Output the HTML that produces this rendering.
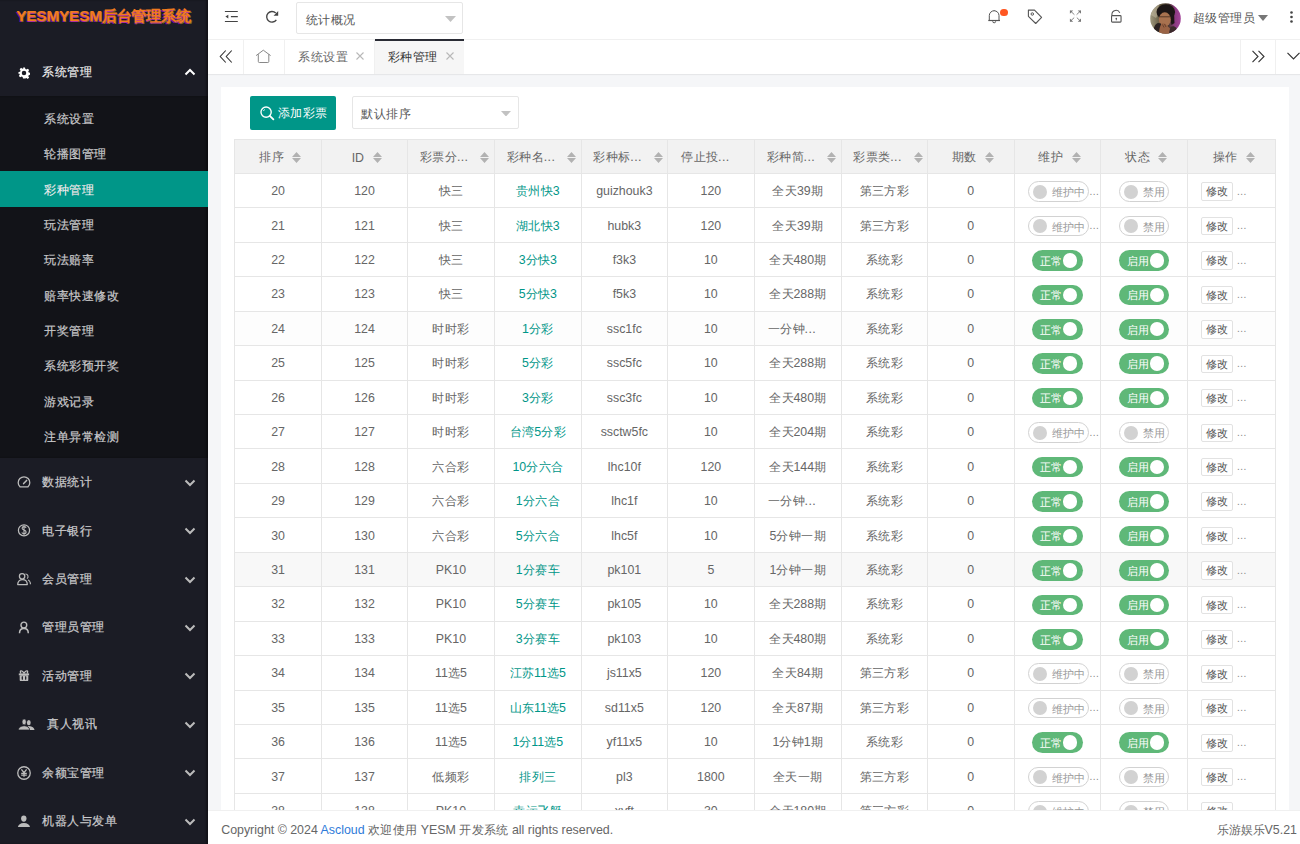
<!DOCTYPE html><html><head><meta charset="utf-8"><style>
*{margin:0;padding:0;box-sizing:border-box}
html,body{width:1300px;height:844px;overflow:hidden;background:#f5f6f8;font-family:"Liberation Sans",sans-serif;}
.a{position:absolute}
.t{position:absolute;white-space:nowrap}
#side{left:0;top:0;width:208px;height:844px;background:#1b1c25;box-shadow:inset -2px 0 2px rgba(0,0,0,.35)}
#sub{left:0;top:96px;width:208px;height:362px;background:#121318;box-shadow:inset -2px 0 2px rgba(0,0,0,.35)}
.logo{left:16.2px;top:4px;font-size:15.4px;font-weight:bold;color:#f07a1e;letter-spacing:-0.2px;line-height:24px;
 text-shadow:-0.6px 1px 0 rgba(210,0,255,.6),0.8px 1px 0 rgba(255,235,0,.45)}
.gi{font-size:12.4px;letter-spacing:.5px;color:#cbcbcd;line-height:20px;-webkit-text-stroke:.2px #cbcbcd}
.si{font-size:12.4px;letter-spacing:.5px;color:#c8c8ca;line-height:20px;-webkit-text-stroke:.2px #c8c8ca}
#hdr{left:208px;top:0;width:1092px;height:40px;background:#fff;border-bottom:1px solid #f0f0f0}
#tabs{left:208px;top:40px;width:1092px;height:34px;background:#fff;box-shadow:0 1px 1px rgba(0,0,0,.06)}
.vl{position:absolute;width:1px;background:#f0f0f0}
#card{left:220.7px;top:86.8px;width:1068.5px;height:760px;background:#fff}
#foot{left:208px;top:810px;width:1092px;height:34px;background:#fff;border-top:1px solid #f0f0f0}
.cell{position:absolute;text-align:center;font-size:12.36px;color:#666;line-height:20px;white-space:nowrap}
.lnk{color:#009688}
.hl{position:absolute;height:1px;background:#e6e6e6}
.vln{position:absolute;width:1px;background:#e6e6e6}
.sw{position:absolute;height:20.5px;border-radius:11px}
.sw.on{background:#5fb878}
.sw.off{background:#fff;border:1px solid #d2d2d2}
.knob{position:absolute;border-radius:50%}
.swt{position:absolute;font-size:10.6px;line-height:14px;white-space:nowrap}
.btnx{position:absolute;height:18.4px;width:31.5px;border:1px solid #e2e2e2;border-radius:2px;background:#fff;font-size:10.6px;color:#555;line-height:16.4px;text-align:center}
.dots{position:absolute;font-size:10px;color:#888;line-height:10px;letter-spacing:0.5px}
</style></head><body>
<div id="side" class="a"></div><div id="sub" class="a"></div>
<div class="t logo">YESMYESM后台管理系统</div>
<svg class="a" style="left:17.5px;top:66.5px" width="12" height="12" viewBox="0 0 24 24"><path fill="#fff" fill-rule="evenodd" d="M10 1h4l.7 3.2 2 .9 2.8-1.8 2.8 2.8-1.8 2.8.9 2 3.2.7v4l-3.2.7-.9 2 1.8 2.8-2.8 2.8-2.8-1.8-2 .9L14 23h-4l-.7-3.2-2-.9-2.8 1.8-2.8-2.8 1.8-2.8-.9-2L1 14v-4l3.2-.7.9-2-1.8-2.8 2.8-2.8 2.8 1.8 2-.9zM12 7.5a4.5 4.5 0 1 0 0 9 4.5 4.5 0 0 0 0-9z"/></svg>
<div class="t gi" style="left:42px;top:61.8px;color:#fff">系统管理</div>
<svg class="a" style="left:184px;top:68px" width="12" height="8" viewBox="0 0 12 8"><path d="M1.5 6.5 6 2l4.5 4.5" fill="none" stroke="#fff" stroke-width="2"/></svg>
<div class="t si" style="left:44px;top:109.07px;">系统设置</div>
<div class="t si" style="left:44px;top:144.4px;">轮播图管理</div>
<div class="a" style="left:0;top:171.36px;width:208px;height:35.8px;background:#009688"></div>
<div class="t si" style="left:44px;top:179.73px;color:#fff">彩种管理</div>
<div class="t si" style="left:44px;top:215.06px;">玩法管理</div>
<div class="t si" style="left:44px;top:250.39px;">玩法赔率</div>
<div class="t si" style="left:44px;top:285.72px;">赔率快速修改</div>
<div class="t si" style="left:44px;top:321.05px;">开奖管理</div>
<div class="t si" style="left:44px;top:356.38px;">系统彩预开奖</div>
<div class="t si" style="left:44px;top:391.71px;">游戏记录</div>
<div class="t si" style="left:44px;top:427.04px;">注单异常检测</div>
<svg class="a" style="left:12px;top:470px" width="24" height="24" viewBox="0 0 24 24"><path d="M8 16.8A5.8 5.8 0 1 1 16 16.8Z" fill="none" stroke="#bcbcbc" stroke-width="1.3" stroke-linejoin="round"/><path d="M11.6 13.6 14.6 10.4" stroke="#bcbcbc" stroke-width="1.5" stroke-linecap="round"/></svg>
<div class="t gi" style="left:42.3px;top:472.2px">数据统计</div>
<svg class="a" style="left:184px;top:478.7px" width="12" height="8" viewBox="0 0 12 8"><path d="M1.5 1.5 6 6l4.5-4.5" fill="none" stroke="#bbb" stroke-width="2"/></svg>
<svg class="a" style="left:12px;top:518px" width="24" height="24" viewBox="0 0 24 24"><circle cx="12" cy="12.35" r="5.6" fill="none" stroke="#bcbcbc" stroke-width="1.25"/><path d="M14.1 9.7C13.7 9 13 8.6 12 8.6 10.9 8.6 10.1 9.2 10.1 10.2 10.1 12.4 14.1 11.6 14.1 14 14.1 15 13.2 15.7 12 15.7 11 15.7 10.2 15.2 9.8 14.5M12 7.4V17.2" fill="none" stroke="#bcbcbc" stroke-width="1.1"/></svg>
<div class="t gi" style="left:42.3px;top:520.63px">电子银行</div>
<svg class="a" style="left:184px;top:527.13px" width="12" height="8" viewBox="0 0 12 8"><path d="M1.5 1.5 6 6l4.5-4.5" fill="none" stroke="#bbb" stroke-width="2"/></svg>
<svg class="a" style="left:12px;top:567px" width="24" height="24" viewBox="0 0 24 24"><circle cx="10.1" cy="9.3" r="2.7" fill="none" stroke="#bcbcbc" stroke-width="1.25"/><path d="M5.7 17.6C5.7 14.3 7.8 12.6 10.5 12.6 13.2 12.6 15.3 14.3 15.3 17.6Z" fill="none" stroke="#bcbcbc" stroke-width="1.25" stroke-linejoin="round"/><path d="M13.4 7A2.6 2.6 0 0 1 15 11.7M16 12.9C17.6 13.7 18.5 15.3 18.5 17.3" fill="none" stroke="#bcbcbc" stroke-width="1.05"/></svg>
<div class="t gi" style="left:42.3px;top:569.06px">会员管理</div>
<svg class="a" style="left:184px;top:575.56px" width="12" height="8" viewBox="0 0 12 8"><path d="M1.5 1.5 6 6l4.5-4.5" fill="none" stroke="#bbb" stroke-width="2"/></svg>
<svg class="a" style="left:12px;top:615px" width="24" height="24" viewBox="0 0 24 24"><circle cx="11.85" cy="10" r="2.9" fill="none" stroke="#bcbcbc" stroke-width="1.4"/><path d="M7.5 18.2C7.5 15.2 9.4 13.6 11.9 13.6S16.3 15.2 16.3 18.2" fill="none" stroke="#bcbcbc" stroke-width="1.5"/></svg>
<div class="t gi" style="left:42.3px;top:617.49px">管理员管理</div>
<svg class="a" style="left:184px;top:623.99px" width="12" height="8" viewBox="0 0 12 8"><path d="M1.5 1.5 6 6l4.5-4.5" fill="none" stroke="#bbb" stroke-width="2"/></svg>
<svg class="a" style="left:12px;top:664px" width="24" height="24" viewBox="0 0 24 24"><path d="M6.8 9.4h10.3v2H6.8z" fill="#bcbcbc"/><rect x="7.7" y="11.2" width="8.6" height="5.9" rx="1.2" fill="#bcbcbc"/><ellipse cx="10.3" cy="14" rx=".7" ry="2" fill="#1b1c25"/><ellipse cx="13.7" cy="14" rx=".7" ry="2" fill="#1b1c25"/><path d="M12 9.4C11 7.2 9.6 6.5 8.8 6.9 8 7.4 8.3 8.8 9.2 9.4M12 9.4C13 7.2 14.4 6.5 15.2 6.9 16 7.4 15.7 8.8 14.8 9.4" stroke="#bcbcbc" stroke-width="1.3" fill="none"/></svg>
<div class="t gi" style="left:42.3px;top:665.92px">活动管理</div>
<svg class="a" style="left:184px;top:672.42px" width="12" height="8" viewBox="0 0 12 8"><path d="M1.5 1.5 6 6l4.5-4.5" fill="none" stroke="#bbb" stroke-width="2"/></svg>
<svg class="a" style="left:12px;top:712px" width="30" height="24" viewBox="0 0 30 24"><ellipse cx="16.8" cy="10.7" rx="1.9" ry="2.6" fill="#bcbcbc"/><path d="M15.4 14.1C19.4 14.1 22.2 15.4 22.5 17.9H17.6C17.5 16.2 16.8 14.9 15.4 14.1Z" fill="#bcbcbc"/><ellipse cx="12.15" cy="9.9" rx="2.1" ry="2.9" fill="#bcbcbc" stroke="#1b1c25" stroke-width=".6"/><path d="M6.4 17.9C6.6 15.4 8.6 14 12.2 13.8 15.5 14 17.4 15.4 17.6 17.9Z" fill="#bcbcbc" stroke="#1b1c25" stroke-width=".6"/></svg>
<div class="t gi" style="left:47.4px;top:714.35px">真人视讯</div>
<svg class="a" style="left:184px;top:720.85px" width="12" height="8" viewBox="0 0 12 8"><path d="M1.5 1.5 6 6l4.5-4.5" fill="none" stroke="#bbb" stroke-width="2"/></svg>
<svg class="a" style="left:12px;top:761px" width="24" height="24" viewBox="0 0 24 24"><circle cx="12" cy="12" r="6.25" fill="none" stroke="#bcbcbc" stroke-width="1.3"/><path d="M9.4 8.3 12 11.6 14.6 8.3M12 11.6V15.8M9.2 12.3H14.8M9.2 14.1H14.8" fill="none" stroke="#bcbcbc" stroke-width="1.3"/></svg>
<div class="t gi" style="left:42.3px;top:762.78px">余额宝管理</div>
<svg class="a" style="left:184px;top:769.28px" width="12" height="8" viewBox="0 0 12 8"><path d="M1.5 1.5 6 6l4.5-4.5" fill="none" stroke="#bbb" stroke-width="2"/></svg>
<svg class="a" style="left:12px;top:809px" width="24" height="24" viewBox="0 0 24 24"><ellipse cx="11.8" cy="9.6" rx="2.7" ry="3.1" fill="#bcbcbc"/><path d="M5.9 18C6.2 15.4 8.4 14.1 11.9 13.9 15.5 14.1 17.7 15.4 18 18Z" fill="#bcbcbc"/></svg>
<div class="t gi" style="left:42.3px;top:811.21px">机器人与发单</div>
<svg class="a" style="left:184px;top:817.71px" width="12" height="8" viewBox="0 0 12 8"><path d="M1.5 1.5 6 6l4.5-4.5" fill="none" stroke="#bbb" stroke-width="2"/></svg>
<div id="hdr" class="a"></div>
<svg class="a" style="left:218px;top:4px" width="24" height="26" viewBox="0 0 24 26"><path d="M6.9 7.5H19.8M12.9 12.6H19.8M6.9 17.5H19.8" stroke="#444" stroke-width="1.15"/><path d="M7.4 12.6 10.3 10.7V14.5Z" fill="#444"/></svg>
<svg class="a" style="left:260px;top:4px" width="24" height="26" viewBox="0 0 24 26"><path d="M15.75 9.05A5.3 5.3 0 1 0 16.34 15.84" fill="none" stroke="#444" stroke-width="1.35"/><path d="M18.2 7.1V11.7H13.6Z" fill="#444"/></svg>
<div class="a" style="left:296.3px;top:2px;width:167.2px;height:32.3px;border:1px solid #e6e6e6;border-radius:2px;background:#fff"></div>
<div class="t" style="left:305.6px;top:9.7px;font-size:12.4px;line-height:20px;color:#555;letter-spacing:.5px">统计概况</div>
<svg class="a" style="left:444.5px;top:16px" width="11" height="6" viewBox="0 0 11 6"><path d="M0 0h11L5.5 6z" fill="#c2c2c2"/></svg>
<svg class="a" style="left:984px;top:4px" width="24" height="26" viewBox="0 0 24 26"><path d="M5.3 16.5V11.6A4.85 4.85 0 0 1 15 11.6V16.5" fill="none" stroke="#555" stroke-width="1"/><path d="M4.3 16.5H16" stroke="#555" stroke-width="1.2"/><path d="M8.7 17.3A1.5 1.5 0 0 0 11.7 17.3" fill="none" stroke="#555" stroke-width="1"/><path d="M10.15 6.2V6.9" stroke="#555" stroke-width="1"/></svg>
<div class="a" style="left:1000.4px;top:8.6px;width:7.2px;height:7.2px;border-radius:50%;background:#ff5722"></div>
<svg class="a" style="left:1024px;top:4px" width="24" height="26" viewBox="0 0 24 26"><path d="M4.4 6.1H10.5L17.6 13.4 11.7 19.5 4.4 12.3Z" fill="none" stroke="#555" stroke-width="1.1" stroke-linejoin="round"/><circle cx="8.3" cy="10" r="1.25" fill="none" stroke="#555" stroke-width="1"/></svg>
<svg class="a" style="left:1064px;top:4px" width="24" height="26" viewBox="0 0 24 26"><path d="M6.5 7 10.4 10.7M16.4 7 12.6 10.7M6.5 17.1 10.2 13.6M16.4 17.1 12.8 13.6" stroke="#777" stroke-width=".9"/><path d="M5.9 6.4H9.2L5.9 9.7ZM17 6.4H13.7L17 9.7ZM5.9 17.7H9.2L5.9 14.4ZM17 17.7H13.7L17 14.4Z" fill="#777"/></svg>
<svg class="a" style="left:1104px;top:4px" width="24" height="26" viewBox="0 0 24 26"><rect x="7.55" y="11.65" width="9.5" height="6.5" rx=".8" fill="none" stroke="#555" stroke-width="1.1"/><path d="M7.9 11.6V10.4A4.1 4.1 0 0 1 15.8 8.9" fill="none" stroke="#555" stroke-width="1.05"/><circle cx="12.3" cy="14.5" r=".8" fill="#555"/><path d="M12.3 14.5V16.3" stroke="#555" stroke-width=".9"/></svg>
<svg class="a" style="left:1150px;top:2.6px" width="31" height="31" viewBox="0 0 31 31"><defs><clipPath id="av"><circle cx="15.5" cy="15.5" r="15.3"/></clipPath>
<linearGradient id="avbg" x1="0" x2="1" y1="0" y2="0"><stop offset="0" stop-color="#a09a80"/><stop offset=".3" stop-color="#6a6048"/><stop offset=".6" stop-color="#4a3a32"/><stop offset=".8" stop-color="#8a3a80"/><stop offset="1" stop-color="#a4449a"/></linearGradient>
<filter id="avb" x="-10%" y="-10%" width="120%" height="120%"><feGaussianBlur stdDeviation=".55"/></filter></defs>
<g clip-path="url(#av)"><rect width="31" height="31" fill="url(#avbg)"/>
<g filter="url(#avb)">
<path d="M1 12C2 7 5 3 9 2l2 5-5 8z" fill="#d0c8b0" opacity=".45"/>
<ellipse cx="15.8" cy="9" rx="9.3" ry="7.8" fill="#1f1713"/>
<path d="M19 10l5 1 .5 9-3 2z" fill="#1f1713"/>
<ellipse cx="14.8" cy="16.5" rx="6" ry="7.2" fill="#a87250"/>
<path d="M8 9.8c3-1.8 9-1.8 12.5 0l.3-4-12.5 0z" fill="#1f1713"/>
<path d="M9 13.8h11" stroke="#3a2418" stroke-width="1" opacity=".75"/>
<path d="M3 31c0-6 2-10 5-11l3 .5 1 10.5z" fill="#2a2220"/>
<path d="M9 31c0-4 1-9 3-10.5 1.5-.8 3.5 0 4.5 1.5l3.5 3.5-1 5.5z" fill="#9a6444"/>
<path d="M12.5 21.5l1.5 3M14.5 21l1.5 3" stroke="#5a3424" stroke-width=".7"/>
<path d="M19 31l1.5-7c2-1 4-1 6 1l1 6z" fill="#3a2a2a"/>
</g></g></svg>
<div class="t" style="left:1192.8px;top:7.8px;font-size:12.4px;line-height:20px;color:#555;letter-spacing:.45px">超级管理员</div>
<svg class="a" style="left:1257.8px;top:15px" width="10" height="6" viewBox="0 0 10 6"><path d="M0 0h10L5 6z" fill="#777"/></svg>
<svg class="a" style="left:1289.5px;top:10.5px" width="3" height="12" viewBox="0 0 3 12"><circle cx="1.5" cy="1.5" r="1.3" fill="#444"/><circle cx="1.5" cy="6" r="1.3" fill="#444"/><circle cx="1.5" cy="10.5" r="1.3" fill="#444"/></svg>
<div id="tabs" class="a"></div>
<svg class="a" style="left:219px;top:50px" width="13.5" height="13" viewBox="0 0 13 13"><path d="M6.5 0.5 1 6.5l5.5 6M12.5 0.5 7 6.5l5.5 6" fill="none" stroke="#333" stroke-width="1.1"/></svg>
<div class="vl" style="left:243px;top:40px;height:34px"></div>
<svg class="a" style="left:252px;top:46px" width="24" height="20" viewBox="0 0 24 20"><path d="M4.1 9.6 11.3 4.2 18.6 9.6M6.3 8.2V15.5Q6.3 16.5 7.3 16.5H15.8Q16.8 16.5 16.8 15.5V8.2" fill="none" stroke="#888" stroke-width="1"/></svg>
<div class="vl" style="left:284px;top:40px;height:34px"></div>
<div class="t" style="left:298px;top:46.5px;font-size:12.4px;line-height:20px;color:#666;letter-spacing:.5px">系统设置</div>
<svg class="a" style="left:355.8px;top:52.3px" width="8" height="8" viewBox="0 0 8 8"><path d="M.5.5l7 7M7.5.5l-7 7" stroke="#b8b8b8" stroke-width="1.1"/></svg>
<div class="a" style="left:374.8px;top:39px;width:89.7px;height:35px;background:#f6f6f6;border-top:2px solid #292b34"></div>
<div class="vl" style="left:374.3px;top:40px;height:34px"></div>
<div class="t" style="left:387.5px;top:46.5px;font-size:12.4px;line-height:20px;color:#333;letter-spacing:.5px">彩种管理</div>
<svg class="a" style="left:445.8px;top:52.3px" width="8" height="8" viewBox="0 0 8 8"><path d="M.5.5l7 7M7.5.5l-7 7" stroke="#b8b8b8" stroke-width="1.1"/></svg>
<div class="vl" style="left:1240px;top:40px;height:34px"></div>
<svg class="a" style="left:1252px;top:50px" width="13" height="13" viewBox="0 0 13 13"><path d="M.5 0.8 6 6.5l-5.5 5.7M6.5 0.8 12 6.5l-5.5 5.7" fill="none" stroke="#333" stroke-width="1.1"/></svg>
<div class="vl" style="left:1275px;top:40px;height:34px"></div>
<svg class="a" style="left:1287px;top:52px" width="13" height="8" viewBox="0 0 13 8"><path d="M.5.8 6.5 6.8 12.5.8" fill="none" stroke="#333" stroke-width="1.2"/></svg>
<div id="card" class="a"></div>
<div class="a" style="left:250px;top:96px;width:86px;height:34px;background:#009688;border-radius:2px"></div>
<svg class="a" style="left:259.5px;top:105.5px" width="15.5" height="15.5" viewBox="0 0 16 16"><circle cx="6.3" cy="6.3" r="5.3" fill="none" stroke="#fff" stroke-width="1.4"/><path d="M10.1 10.1 13.8 13.8" stroke="#fff" stroke-width="1.9" stroke-linecap="round"/><path d="M3.6 5.2a3 3 0 0 1 1.2-1.6" fill="none" stroke="#fff" stroke-width="1"/></svg>
<div class="t" style="left:277.5px;top:103px;font-size:12.4px;line-height:20px;color:#fff;letter-spacing:.5px">添加彩票</div>
<div class="a" style="left:352.4px;top:96.3px;width:167.1px;height:33.2px;border:1px solid #e6e6e6;border-radius:2px;background:#fff"></div>
<div class="t" style="left:361.2px;top:104px;font-size:12.4px;line-height:20px;color:#555;letter-spacing:.5px">默认排序</div>
<svg class="a" style="left:500.6px;top:110.5px" width="10" height="5.5" viewBox="0 0 10 5.5"><path d="M0 0h10L5 5.5z" fill="#c2c2c2"/></svg>
<div id="tbl" class="a" style="left:0;top:0;width:1300px;height:810px;overflow:hidden">
<div class="a" style="left:234.7px;top:139.2px;width:1040.9px;height:34.2px;background:#f2f2f2"></div>
<div class="a" style="left:234.7px;top:311.18px;width:1040.9px;height:34.45px;background:#fdfdfd"></div>
<div class="a" style="left:234.7px;top:552.29px;width:1040.9px;height:34.45px;background:#f8f8f8"></div>
<div class="hl" style="left:234.7px;top:138.7px;width:1040.9px"></div>
<div class="hl" style="left:234.7px;top:172.9px;width:1040.9px"></div>
<div class="hl" style="left:234.7px;top:207.34px;width:1040.9px"></div>
<div class="hl" style="left:234.7px;top:241.79px;width:1040.9px"></div>
<div class="hl" style="left:234.7px;top:276.24px;width:1040.9px"></div>
<div class="hl" style="left:234.7px;top:310.68px;width:1040.9px"></div>
<div class="hl" style="left:234.7px;top:345.12px;width:1040.9px"></div>
<div class="hl" style="left:234.7px;top:379.57px;width:1040.9px"></div>
<div class="hl" style="left:234.7px;top:414.01px;width:1040.9px"></div>
<div class="hl" style="left:234.7px;top:448.46px;width:1040.9px"></div>
<div class="hl" style="left:234.7px;top:482.9px;width:1040.9px"></div>
<div class="hl" style="left:234.7px;top:517.35px;width:1040.9px"></div>
<div class="hl" style="left:234.7px;top:551.79px;width:1040.9px"></div>
<div class="hl" style="left:234.7px;top:586.24px;width:1040.9px"></div>
<div class="hl" style="left:234.7px;top:620.69px;width:1040.9px"></div>
<div class="hl" style="left:234.7px;top:655.13px;width:1040.9px"></div>
<div class="hl" style="left:234.7px;top:689.57px;width:1040.9px"></div>
<div class="hl" style="left:234.7px;top:724.02px;width:1040.9px"></div>
<div class="hl" style="left:234.7px;top:758.47px;width:1040.9px"></div>
<div class="hl" style="left:234.7px;top:792.91px;width:1040.9px"></div>
<div class="hl" style="left:234.7px;top:827.36px;width:1040.9px"></div>
<div class="vln" style="left:234.2px;top:139.2px;height:670.8px"></div>
<div class="vln" style="left:321px;top:139.2px;height:670.8px"></div>
<div class="vln" style="left:407.1px;top:139.2px;height:670.8px"></div>
<div class="vln" style="left:493.8px;top:139.2px;height:670.8px"></div>
<div class="vln" style="left:580.7px;top:139.2px;height:670.8px"></div>
<div class="vln" style="left:667px;top:139.2px;height:670.8px"></div>
<div class="vln" style="left:753.7px;top:139.2px;height:670.8px"></div>
<div class="vln" style="left:840.5px;top:139.2px;height:670.8px"></div>
<div class="vln" style="left:927px;top:139.2px;height:670.8px"></div>
<div class="vln" style="left:1013.5px;top:139.2px;height:670.8px"></div>
<div class="vln" style="left:1100.1px;top:139.2px;height:670.8px"></div>
<div class="vln" style="left:1187px;top:139.2px;height:670.8px"></div>
<div class="vln" style="left:1275.1px;top:139.2px;height:670.8px"></div>
<div class="a" style="left:234.7px;top:139.2px;width:86.8px;height:34.2px;display:flex;align-items:center;justify-content:center;padding:2.5px 13.25px 0 13.25px;font-size:12.36px;color:#666;white-space:nowrap">
<span><span style="letter-spacing:.45px">排</span>序</span>
<svg style="margin-left:8.8px;flex:none;margin-right:-4.4px;margin-top:-1px" width="9" height="11" viewBox="0 0 9 11"><path d="M0 5 4.5 0 9 5zM0 6h9L4.5 11z" fill="#b2b2b2"/></svg>
</div>
<div class="a" style="left:321.5px;top:139.2px;width:86.1px;height:34.2px;display:flex;align-items:center;justify-content:center;padding:2.5px 13.25px 0 13.25px;font-size:12.36px;color:#666;white-space:nowrap">
<span>ID</span>
<svg style="margin-left:8.8px;flex:none;margin-right:-4.4px;margin-top:-1px" width="9" height="11" viewBox="0 0 9 11"><path d="M0 5 4.5 0 9 5zM0 6h9L4.5 11z" fill="#b2b2b2"/></svg>
</div>
<div class="a" style="left:407.6px;top:139.2px;width:86.7px;height:34.2px;display:flex;align-items:center;justify-content:center;padding:2.5px 13.25px 0 13.25px;font-size:12.36px;color:#666;white-space:nowrap">
<span><span style="letter-spacing:.45px">彩票</span>分<span style="letter-spacing:.4px">...</span></span>
<svg style="margin-left:11.8px;flex:none;margin-right:-7.4px;margin-top:-1px" width="9" height="11" viewBox="0 0 9 11"><path d="M0 5 4.5 0 9 5zM0 6h9L4.5 11z" fill="#b2b2b2"/></svg>
</div>
<div class="a" style="left:494.3px;top:139.2px;width:86.9px;height:34.2px;display:flex;align-items:center;justify-content:center;padding:2.5px 13.25px 0 13.25px;font-size:12.36px;color:#666;white-space:nowrap">
<span><span style="letter-spacing:.45px">彩种</span>名<span style="letter-spacing:.4px">...</span></span>
<svg style="margin-left:11.8px;flex:none;margin-right:-7.4px;margin-top:-1px" width="9" height="11" viewBox="0 0 9 11"><path d="M0 5 4.5 0 9 5zM0 6h9L4.5 11z" fill="#b2b2b2"/></svg>
</div>
<div class="a" style="left:581.2px;top:139.2px;width:86.3px;height:34.2px;display:flex;align-items:center;justify-content:center;padding:2.5px 13.25px 0 13.25px;font-size:12.36px;color:#666;white-space:nowrap">
<span><span style="letter-spacing:.45px">彩种</span>标<span style="letter-spacing:.4px">...</span></span>
<svg style="margin-left:11.8px;flex:none;margin-right:-7.4px;margin-top:-1px" width="9" height="11" viewBox="0 0 9 11"><path d="M0 5 4.5 0 9 5zM0 6h9L4.5 11z" fill="#b2b2b2"/></svg>
</div>
<div class="a" style="left:667.5px;top:139.2px;width:86.7px;height:34.2px;display:flex;align-items:center;justify-content:flex-start;padding:2.5px 13.25px 0 13.7px;font-size:12.36px;color:#666;white-space:nowrap">
<span><span style="letter-spacing:.45px">停止</span>投<span style="letter-spacing:.4px">...</span></span>
</div>
<div class="a" style="left:754.2px;top:139.2px;width:86.8px;height:34.2px;display:flex;align-items:center;justify-content:center;padding:2.5px 13.25px 0 13.25px;font-size:12.36px;color:#666;white-space:nowrap">
<span><span style="letter-spacing:.45px">彩种</span>简<span style="letter-spacing:.4px">...</span></span>
<svg style="margin-left:11.8px;flex:none;margin-right:-7.4px;margin-top:-1px" width="9" height="11" viewBox="0 0 9 11"><path d="M0 5 4.5 0 9 5zM0 6h9L4.5 11z" fill="#b2b2b2"/></svg>
</div>
<div class="a" style="left:841px;top:139.2px;width:86.5px;height:34.2px;display:flex;align-items:center;justify-content:center;padding:2.5px 13.25px 0 13.25px;font-size:12.36px;color:#666;white-space:nowrap">
<span><span style="letter-spacing:.45px">彩票</span>类<span style="letter-spacing:.4px">...</span></span>
<svg style="margin-left:11.8px;flex:none;margin-right:-7.4px;margin-top:-1px" width="9" height="11" viewBox="0 0 9 11"><path d="M0 5 4.5 0 9 5zM0 6h9L4.5 11z" fill="#b2b2b2"/></svg>
</div>
<div class="a" style="left:927.5px;top:139.2px;width:86.5px;height:34.2px;display:flex;align-items:center;justify-content:center;padding:2.5px 13.25px 0 13.25px;font-size:12.36px;color:#666;white-space:nowrap">
<span><span style="letter-spacing:.45px">期</span>数</span>
<svg style="margin-left:8.8px;flex:none;margin-right:-4.4px;margin-top:-1px" width="9" height="11" viewBox="0 0 9 11"><path d="M0 5 4.5 0 9 5zM0 6h9L4.5 11z" fill="#b2b2b2"/></svg>
</div>
<div class="a" style="left:1014px;top:139.2px;width:86.6px;height:34.2px;display:flex;align-items:center;justify-content:center;padding:2.5px 13.25px 0 13.25px;font-size:12.36px;color:#666;white-space:nowrap">
<span><span style="letter-spacing:.45px">维</span>护</span>
<svg style="margin-left:8.8px;flex:none;margin-right:-4.4px;margin-top:-1px" width="9" height="11" viewBox="0 0 9 11"><path d="M0 5 4.5 0 9 5zM0 6h9L4.5 11z" fill="#b2b2b2"/></svg>
</div>
<div class="a" style="left:1100.6px;top:139.2px;width:86.9px;height:34.2px;display:flex;align-items:center;justify-content:center;padding:2.5px 13.25px 0 13.25px;font-size:12.36px;color:#666;white-space:nowrap">
<span><span style="letter-spacing:.45px">状</span>态</span>
<svg style="margin-left:8.8px;flex:none;margin-right:-4.4px;margin-top:-1px" width="9" height="11" viewBox="0 0 9 11"><path d="M0 5 4.5 0 9 5zM0 6h9L4.5 11z" fill="#b2b2b2"/></svg>
</div>
<div class="a" style="left:1187.5px;top:139.2px;width:88.1px;height:34.2px;display:flex;align-items:center;justify-content:center;padding:2.5px 13.25px 0 13.25px;font-size:12.36px;color:#666;white-space:nowrap">
<span><span style="letter-spacing:.45px">操</span>作</span>
<svg style="margin-left:8.8px;flex:none;margin-right:-4.4px;margin-top:-1px" width="9" height="11" viewBox="0 0 9 11"><path d="M0 5 4.5 0 9 5zM0 6h9L4.5 11z" fill="#b2b2b2"/></svg>
</div>
<div class="cell" style="left:234.7px;top:181.12px;width:86.8px">20</div>
<div class="cell" style="left:321.5px;top:181.12px;width:86.1px">120</div>
<div class="cell" style="left:407.6px;top:181.12px;width:86.7px"><span style="letter-spacing:.45px">快</span>三</div>
<div class="cell lnk" style="left:494.3px;top:181.12px;width:86.9px"><span style="letter-spacing:.45px">贵州</span>快3</div>
<div class="cell" style="left:581.2px;top:181.12px;width:86.3px">guizhouk3</div>
<div class="cell" style="left:667.5px;top:181.12px;width:86.7px">120</div>
<div class="cell" style="left:754.2px;top:181.12px;width:86.8px"><span style="letter-spacing:.45px">全</span>天39期</div>
<div class="cell" style="left:841px;top:181.12px;width:86.5px"><span style="letter-spacing:.45px">第三方</span>彩</div>
<div class="cell" style="left:927.5px;top:181.12px;width:86.5px">0</div>
<div class="sw off" style="left:1028px;top:181.22px;width:60.6px"><div class="knob" style="left:4.2px;top:2.5px;width:13.8px;height:13.8px;background:#d2d2d2"></div><div class="swt" style="left:22.5px;top:3px;color:#999">维护中</div></div>
<div class="dots" style="left:1089.5px;top:186.52px">...</div>
<div class="sw off" style="left:1119px;top:181.22px;width:50px"><div class="knob" style="left:4.2px;top:2.5px;width:13.8px;height:13.8px;background:#d2d2d2"></div><div class="swt" style="left:23px;top:3px;color:#999">禁用</div></div>
<div class="btnx" style="left:1201.2px;top:182.4px">修改</div>
<div class="dots" style="left:1237px;top:186.62px">...</div>
<div class="cell" style="left:234.7px;top:215.57px;width:86.8px">21</div>
<div class="cell" style="left:321.5px;top:215.57px;width:86.1px">121</div>
<div class="cell" style="left:407.6px;top:215.57px;width:86.7px"><span style="letter-spacing:.45px">快</span>三</div>
<div class="cell lnk" style="left:494.3px;top:215.57px;width:86.9px"><span style="letter-spacing:.45px">湖北</span>快3</div>
<div class="cell" style="left:581.2px;top:215.57px;width:86.3px">hubk3</div>
<div class="cell" style="left:667.5px;top:215.57px;width:86.7px">120</div>
<div class="cell" style="left:754.2px;top:215.57px;width:86.8px"><span style="letter-spacing:.45px">全</span>天39期</div>
<div class="cell" style="left:841px;top:215.57px;width:86.5px"><span style="letter-spacing:.45px">第三方</span>彩</div>
<div class="cell" style="left:927.5px;top:215.57px;width:86.5px">0</div>
<div class="sw off" style="left:1028px;top:215.67px;width:60.6px"><div class="knob" style="left:4.2px;top:2.5px;width:13.8px;height:13.8px;background:#d2d2d2"></div><div class="swt" style="left:22.5px;top:3px;color:#999">维护中</div></div>
<div class="dots" style="left:1089.5px;top:220.97px">...</div>
<div class="sw off" style="left:1119px;top:215.67px;width:50px"><div class="knob" style="left:4.2px;top:2.5px;width:13.8px;height:13.8px;background:#d2d2d2"></div><div class="swt" style="left:23px;top:3px;color:#999">禁用</div></div>
<div class="btnx" style="left:1201.2px;top:216.84px">修改</div>
<div class="dots" style="left:1237px;top:221.07px">...</div>
<div class="cell" style="left:234.7px;top:250.01px;width:86.8px">22</div>
<div class="cell" style="left:321.5px;top:250.01px;width:86.1px">122</div>
<div class="cell" style="left:407.6px;top:250.01px;width:86.7px"><span style="letter-spacing:.45px">快</span>三</div>
<div class="cell lnk" style="left:494.3px;top:250.01px;width:86.9px">3<span style="letter-spacing:.45px">分</span>快3</div>
<div class="cell" style="left:581.2px;top:250.01px;width:86.3px">f3k3</div>
<div class="cell" style="left:667.5px;top:250.01px;width:86.7px">10</div>
<div class="cell" style="left:754.2px;top:250.01px;width:86.8px"><span style="letter-spacing:.45px">全</span>天480期</div>
<div class="cell" style="left:841px;top:250.01px;width:86.5px"><span style="letter-spacing:.45px">系统</span>彩</div>
<div class="cell" style="left:927.5px;top:250.01px;width:86.5px">0</div>
<div class="sw on" style="left:1032px;top:250.11px;width:50.6px"><div class="knob" style="left:31px;top:3px;width:14.4px;height:14.4px;background:#fff"></div><div class="swt" style="left:8px;top:3.5px;color:#fff">正常</div></div>
<div class="sw on" style="left:1118.6px;top:250.11px;width:50.6px"><div class="knob" style="left:31px;top:3px;width:14.4px;height:14.4px;background:#fff"></div><div class="swt" style="left:8px;top:3.5px;color:#fff">启用</div></div>
<div class="btnx" style="left:1201.2px;top:251.29px">修改</div>
<div class="dots" style="left:1237px;top:255.51px">...</div>
<div class="cell" style="left:234.7px;top:284.46px;width:86.8px">23</div>
<div class="cell" style="left:321.5px;top:284.46px;width:86.1px">123</div>
<div class="cell" style="left:407.6px;top:284.46px;width:86.7px"><span style="letter-spacing:.45px">快</span>三</div>
<div class="cell lnk" style="left:494.3px;top:284.46px;width:86.9px">5<span style="letter-spacing:.45px">分</span>快3</div>
<div class="cell" style="left:581.2px;top:284.46px;width:86.3px">f5k3</div>
<div class="cell" style="left:667.5px;top:284.46px;width:86.7px">10</div>
<div class="cell" style="left:754.2px;top:284.46px;width:86.8px"><span style="letter-spacing:.45px">全</span>天288期</div>
<div class="cell" style="left:841px;top:284.46px;width:86.5px"><span style="letter-spacing:.45px">系统</span>彩</div>
<div class="cell" style="left:927.5px;top:284.46px;width:86.5px">0</div>
<div class="sw on" style="left:1032px;top:284.56px;width:50.6px"><div class="knob" style="left:31px;top:3px;width:14.4px;height:14.4px;background:#fff"></div><div class="swt" style="left:8px;top:3.5px;color:#fff">正常</div></div>
<div class="sw on" style="left:1118.6px;top:284.56px;width:50.6px"><div class="knob" style="left:31px;top:3px;width:14.4px;height:14.4px;background:#fff"></div><div class="swt" style="left:8px;top:3.5px;color:#fff">启用</div></div>
<div class="btnx" style="left:1201.2px;top:285.74px">修改</div>
<div class="dots" style="left:1237px;top:289.96px">...</div>
<div class="cell" style="left:234.7px;top:318.9px;width:86.8px">24</div>
<div class="cell" style="left:321.5px;top:318.9px;width:86.1px">124</div>
<div class="cell" style="left:407.6px;top:318.9px;width:86.7px"><span style="letter-spacing:.45px">时时</span>彩</div>
<div class="cell lnk" style="left:494.3px;top:318.9px;width:86.9px">1<span style="letter-spacing:.45px">分</span>彩</div>
<div class="cell" style="left:581.2px;top:318.9px;width:86.3px">ssc1fc</div>
<div class="cell" style="left:667.5px;top:318.9px;width:86.7px">10</div>
<div class="cell" style="left:754.2px;top:318.9px;width:86.8px;text-align:left;padding-left:13.5px"><span style="letter-spacing:.45px">一分</span>钟<span style="letter-spacing:.4px">...</span></div>
<div class="cell" style="left:841px;top:318.9px;width:86.5px"><span style="letter-spacing:.45px">系统</span>彩</div>
<div class="cell" style="left:927.5px;top:318.9px;width:86.5px">0</div>
<div class="sw on" style="left:1032px;top:319px;width:50.6px"><div class="knob" style="left:31px;top:3px;width:14.4px;height:14.4px;background:#fff"></div><div class="swt" style="left:8px;top:3.5px;color:#fff">正常</div></div>
<div class="sw on" style="left:1118.6px;top:319px;width:50.6px"><div class="knob" style="left:31px;top:3px;width:14.4px;height:14.4px;background:#fff"></div><div class="swt" style="left:8px;top:3.5px;color:#fff">启用</div></div>
<div class="btnx" style="left:1201.2px;top:320.18px">修改</div>
<div class="dots" style="left:1237px;top:324.4px">...</div>
<div class="cell" style="left:234.7px;top:353.35px;width:86.8px">25</div>
<div class="cell" style="left:321.5px;top:353.35px;width:86.1px">125</div>
<div class="cell" style="left:407.6px;top:353.35px;width:86.7px"><span style="letter-spacing:.45px">时时</span>彩</div>
<div class="cell lnk" style="left:494.3px;top:353.35px;width:86.9px">5<span style="letter-spacing:.45px">分</span>彩</div>
<div class="cell" style="left:581.2px;top:353.35px;width:86.3px">ssc5fc</div>
<div class="cell" style="left:667.5px;top:353.35px;width:86.7px">10</div>
<div class="cell" style="left:754.2px;top:353.35px;width:86.8px"><span style="letter-spacing:.45px">全</span>天288期</div>
<div class="cell" style="left:841px;top:353.35px;width:86.5px"><span style="letter-spacing:.45px">系统</span>彩</div>
<div class="cell" style="left:927.5px;top:353.35px;width:86.5px">0</div>
<div class="sw on" style="left:1032px;top:353.45px;width:50.6px"><div class="knob" style="left:31px;top:3px;width:14.4px;height:14.4px;background:#fff"></div><div class="swt" style="left:8px;top:3.5px;color:#fff">正常</div></div>
<div class="sw on" style="left:1118.6px;top:353.45px;width:50.6px"><div class="knob" style="left:31px;top:3px;width:14.4px;height:14.4px;background:#fff"></div><div class="swt" style="left:8px;top:3.5px;color:#fff">启用</div></div>
<div class="btnx" style="left:1201.2px;top:354.62px">修改</div>
<div class="dots" style="left:1237px;top:358.85px">...</div>
<div class="cell" style="left:234.7px;top:387.79px;width:86.8px">26</div>
<div class="cell" style="left:321.5px;top:387.79px;width:86.1px">126</div>
<div class="cell" style="left:407.6px;top:387.79px;width:86.7px"><span style="letter-spacing:.45px">时时</span>彩</div>
<div class="cell lnk" style="left:494.3px;top:387.79px;width:86.9px">3<span style="letter-spacing:.45px">分</span>彩</div>
<div class="cell" style="left:581.2px;top:387.79px;width:86.3px">ssc3fc</div>
<div class="cell" style="left:667.5px;top:387.79px;width:86.7px">10</div>
<div class="cell" style="left:754.2px;top:387.79px;width:86.8px"><span style="letter-spacing:.45px">全</span>天480期</div>
<div class="cell" style="left:841px;top:387.79px;width:86.5px"><span style="letter-spacing:.45px">系统</span>彩</div>
<div class="cell" style="left:927.5px;top:387.79px;width:86.5px">0</div>
<div class="sw on" style="left:1032px;top:387.89px;width:50.6px"><div class="knob" style="left:31px;top:3px;width:14.4px;height:14.4px;background:#fff"></div><div class="swt" style="left:8px;top:3.5px;color:#fff">正常</div></div>
<div class="sw on" style="left:1118.6px;top:387.89px;width:50.6px"><div class="knob" style="left:31px;top:3px;width:14.4px;height:14.4px;background:#fff"></div><div class="swt" style="left:8px;top:3.5px;color:#fff">启用</div></div>
<div class="btnx" style="left:1201.2px;top:389.07px">修改</div>
<div class="dots" style="left:1237px;top:393.29px">...</div>
<div class="cell" style="left:234.7px;top:422.24px;width:86.8px">27</div>
<div class="cell" style="left:321.5px;top:422.24px;width:86.1px">127</div>
<div class="cell" style="left:407.6px;top:422.24px;width:86.7px"><span style="letter-spacing:.45px">时时</span>彩</div>
<div class="cell lnk" style="left:494.3px;top:422.24px;width:86.9px"><span style="letter-spacing:.45px">台</span>湾5<span style="letter-spacing:.45px">分</span>彩</div>
<div class="cell" style="left:581.2px;top:422.24px;width:86.3px">ssctw5fc</div>
<div class="cell" style="left:667.5px;top:422.24px;width:86.7px">10</div>
<div class="cell" style="left:754.2px;top:422.24px;width:86.8px"><span style="letter-spacing:.45px">全</span>天204期</div>
<div class="cell" style="left:841px;top:422.24px;width:86.5px"><span style="letter-spacing:.45px">系统</span>彩</div>
<div class="cell" style="left:927.5px;top:422.24px;width:86.5px">0</div>
<div class="sw off" style="left:1028px;top:422.34px;width:60.6px"><div class="knob" style="left:4.2px;top:2.5px;width:13.8px;height:13.8px;background:#d2d2d2"></div><div class="swt" style="left:22.5px;top:3px;color:#999">维护中</div></div>
<div class="dots" style="left:1089.5px;top:427.64px">...</div>
<div class="sw off" style="left:1119px;top:422.34px;width:50px"><div class="knob" style="left:4.2px;top:2.5px;width:13.8px;height:13.8px;background:#d2d2d2"></div><div class="swt" style="left:23px;top:3px;color:#999">禁用</div></div>
<div class="btnx" style="left:1201.2px;top:423.51px">修改</div>
<div class="dots" style="left:1237px;top:427.74px">...</div>
<div class="cell" style="left:234.7px;top:456.68px;width:86.8px">28</div>
<div class="cell" style="left:321.5px;top:456.68px;width:86.1px">128</div>
<div class="cell" style="left:407.6px;top:456.68px;width:86.7px"><span style="letter-spacing:.45px">六合</span>彩</div>
<div class="cell lnk" style="left:494.3px;top:456.68px;width:86.9px">10<span style="letter-spacing:.45px">分六</span>合</div>
<div class="cell" style="left:581.2px;top:456.68px;width:86.3px">lhc10f</div>
<div class="cell" style="left:667.5px;top:456.68px;width:86.7px">120</div>
<div class="cell" style="left:754.2px;top:456.68px;width:86.8px"><span style="letter-spacing:.45px">全</span>天144期</div>
<div class="cell" style="left:841px;top:456.68px;width:86.5px"><span style="letter-spacing:.45px">系统</span>彩</div>
<div class="cell" style="left:927.5px;top:456.68px;width:86.5px">0</div>
<div class="sw on" style="left:1032px;top:456.78px;width:50.6px"><div class="knob" style="left:31px;top:3px;width:14.4px;height:14.4px;background:#fff"></div><div class="swt" style="left:8px;top:3.5px;color:#fff">正常</div></div>
<div class="sw on" style="left:1118.6px;top:456.78px;width:50.6px"><div class="knob" style="left:31px;top:3px;width:14.4px;height:14.4px;background:#fff"></div><div class="swt" style="left:8px;top:3.5px;color:#fff">启用</div></div>
<div class="btnx" style="left:1201.2px;top:457.96px">修改</div>
<div class="dots" style="left:1237px;top:462.18px">...</div>
<div class="cell" style="left:234.7px;top:491.13px;width:86.8px">29</div>
<div class="cell" style="left:321.5px;top:491.13px;width:86.1px">129</div>
<div class="cell" style="left:407.6px;top:491.13px;width:86.7px"><span style="letter-spacing:.45px">六合</span>彩</div>
<div class="cell lnk" style="left:494.3px;top:491.13px;width:86.9px">1<span style="letter-spacing:.45px">分六</span>合</div>
<div class="cell" style="left:581.2px;top:491.13px;width:86.3px">lhc1f</div>
<div class="cell" style="left:667.5px;top:491.13px;width:86.7px">10</div>
<div class="cell" style="left:754.2px;top:491.13px;width:86.8px;text-align:left;padding-left:13.5px"><span style="letter-spacing:.45px">一分</span>钟<span style="letter-spacing:.4px">...</span></div>
<div class="cell" style="left:841px;top:491.13px;width:86.5px"><span style="letter-spacing:.45px">系统</span>彩</div>
<div class="cell" style="left:927.5px;top:491.13px;width:86.5px">0</div>
<div class="sw on" style="left:1032px;top:491.23px;width:50.6px"><div class="knob" style="left:31px;top:3px;width:14.4px;height:14.4px;background:#fff"></div><div class="swt" style="left:8px;top:3.5px;color:#fff">正常</div></div>
<div class="sw on" style="left:1118.6px;top:491.23px;width:50.6px"><div class="knob" style="left:31px;top:3px;width:14.4px;height:14.4px;background:#fff"></div><div class="swt" style="left:8px;top:3.5px;color:#fff">启用</div></div>
<div class="btnx" style="left:1201.2px;top:492.4px">修改</div>
<div class="dots" style="left:1237px;top:496.63px">...</div>
<div class="cell" style="left:234.7px;top:525.57px;width:86.8px">30</div>
<div class="cell" style="left:321.5px;top:525.57px;width:86.1px">130</div>
<div class="cell" style="left:407.6px;top:525.57px;width:86.7px"><span style="letter-spacing:.45px">六合</span>彩</div>
<div class="cell lnk" style="left:494.3px;top:525.57px;width:86.9px">5<span style="letter-spacing:.45px">分六</span>合</div>
<div class="cell" style="left:581.2px;top:525.57px;width:86.3px">lhc5f</div>
<div class="cell" style="left:667.5px;top:525.57px;width:86.7px">10</div>
<div class="cell" style="left:754.2px;top:525.57px;width:86.8px">5<span style="letter-spacing:.45px">分钟一</span>期</div>
<div class="cell" style="left:841px;top:525.57px;width:86.5px"><span style="letter-spacing:.45px">系统</span>彩</div>
<div class="cell" style="left:927.5px;top:525.57px;width:86.5px">0</div>
<div class="sw on" style="left:1032px;top:525.67px;width:50.6px"><div class="knob" style="left:31px;top:3px;width:14.4px;height:14.4px;background:#fff"></div><div class="swt" style="left:8px;top:3.5px;color:#fff">正常</div></div>
<div class="sw on" style="left:1118.6px;top:525.67px;width:50.6px"><div class="knob" style="left:31px;top:3px;width:14.4px;height:14.4px;background:#fff"></div><div class="swt" style="left:8px;top:3.5px;color:#fff">启用</div></div>
<div class="btnx" style="left:1201.2px;top:526.85px">修改</div>
<div class="dots" style="left:1237px;top:531.07px">...</div>
<div class="cell" style="left:234.7px;top:560.02px;width:86.8px">31</div>
<div class="cell" style="left:321.5px;top:560.02px;width:86.1px">131</div>
<div class="cell" style="left:407.6px;top:560.02px;width:86.7px">PK10</div>
<div class="cell lnk" style="left:494.3px;top:560.02px;width:86.9px">1<span style="letter-spacing:.45px">分赛</span>车</div>
<div class="cell" style="left:581.2px;top:560.02px;width:86.3px">pk101</div>
<div class="cell" style="left:667.5px;top:560.02px;width:86.7px">5</div>
<div class="cell" style="left:754.2px;top:560.02px;width:86.8px">1<span style="letter-spacing:.45px">分钟一</span>期</div>
<div class="cell" style="left:841px;top:560.02px;width:86.5px"><span style="letter-spacing:.45px">系统</span>彩</div>
<div class="cell" style="left:927.5px;top:560.02px;width:86.5px">0</div>
<div class="sw on" style="left:1032px;top:560.12px;width:50.6px"><div class="knob" style="left:31px;top:3px;width:14.4px;height:14.4px;background:#fff"></div><div class="swt" style="left:8px;top:3.5px;color:#fff">正常</div></div>
<div class="sw on" style="left:1118.6px;top:560.12px;width:50.6px"><div class="knob" style="left:31px;top:3px;width:14.4px;height:14.4px;background:#fff"></div><div class="swt" style="left:8px;top:3.5px;color:#fff">启用</div></div>
<div class="btnx" style="left:1201.2px;top:561.29px">修改</div>
<div class="dots" style="left:1237px;top:565.52px">...</div>
<div class="cell" style="left:234.7px;top:594.46px;width:86.8px">32</div>
<div class="cell" style="left:321.5px;top:594.46px;width:86.1px">132</div>
<div class="cell" style="left:407.6px;top:594.46px;width:86.7px">PK10</div>
<div class="cell lnk" style="left:494.3px;top:594.46px;width:86.9px">5<span style="letter-spacing:.45px">分赛</span>车</div>
<div class="cell" style="left:581.2px;top:594.46px;width:86.3px">pk105</div>
<div class="cell" style="left:667.5px;top:594.46px;width:86.7px">10</div>
<div class="cell" style="left:754.2px;top:594.46px;width:86.8px"><span style="letter-spacing:.45px">全</span>天288期</div>
<div class="cell" style="left:841px;top:594.46px;width:86.5px"><span style="letter-spacing:.45px">系统</span>彩</div>
<div class="cell" style="left:927.5px;top:594.46px;width:86.5px">0</div>
<div class="sw on" style="left:1032px;top:594.56px;width:50.6px"><div class="knob" style="left:31px;top:3px;width:14.4px;height:14.4px;background:#fff"></div><div class="swt" style="left:8px;top:3.5px;color:#fff">正常</div></div>
<div class="sw on" style="left:1118.6px;top:594.56px;width:50.6px"><div class="knob" style="left:31px;top:3px;width:14.4px;height:14.4px;background:#fff"></div><div class="swt" style="left:8px;top:3.5px;color:#fff">启用</div></div>
<div class="btnx" style="left:1201.2px;top:595.74px">修改</div>
<div class="dots" style="left:1237px;top:599.96px">...</div>
<div class="cell" style="left:234.7px;top:628.91px;width:86.8px">33</div>
<div class="cell" style="left:321.5px;top:628.91px;width:86.1px">133</div>
<div class="cell" style="left:407.6px;top:628.91px;width:86.7px">PK10</div>
<div class="cell lnk" style="left:494.3px;top:628.91px;width:86.9px">3<span style="letter-spacing:.45px">分赛</span>车</div>
<div class="cell" style="left:581.2px;top:628.91px;width:86.3px">pk103</div>
<div class="cell" style="left:667.5px;top:628.91px;width:86.7px">10</div>
<div class="cell" style="left:754.2px;top:628.91px;width:86.8px"><span style="letter-spacing:.45px">全</span>天480期</div>
<div class="cell" style="left:841px;top:628.91px;width:86.5px"><span style="letter-spacing:.45px">系统</span>彩</div>
<div class="cell" style="left:927.5px;top:628.91px;width:86.5px">0</div>
<div class="sw on" style="left:1032px;top:629.01px;width:50.6px"><div class="knob" style="left:31px;top:3px;width:14.4px;height:14.4px;background:#fff"></div><div class="swt" style="left:8px;top:3.5px;color:#fff">正常</div></div>
<div class="sw on" style="left:1118.6px;top:629.01px;width:50.6px"><div class="knob" style="left:31px;top:3px;width:14.4px;height:14.4px;background:#fff"></div><div class="swt" style="left:8px;top:3.5px;color:#fff">启用</div></div>
<div class="btnx" style="left:1201.2px;top:630.19px">修改</div>
<div class="dots" style="left:1237px;top:634.41px">...</div>
<div class="cell" style="left:234.7px;top:663.35px;width:86.8px">34</div>
<div class="cell" style="left:321.5px;top:663.35px;width:86.1px">134</div>
<div class="cell" style="left:407.6px;top:663.35px;width:86.7px">11选5</div>
<div class="cell lnk" style="left:494.3px;top:663.35px;width:86.9px"><span style="letter-spacing:.45px">江</span>苏11选5</div>
<div class="cell" style="left:581.2px;top:663.35px;width:86.3px">js11x5</div>
<div class="cell" style="left:667.5px;top:663.35px;width:86.7px">120</div>
<div class="cell" style="left:754.2px;top:663.35px;width:86.8px"><span style="letter-spacing:.45px">全</span>天84期</div>
<div class="cell" style="left:841px;top:663.35px;width:86.5px"><span style="letter-spacing:.45px">第三方</span>彩</div>
<div class="cell" style="left:927.5px;top:663.35px;width:86.5px">0</div>
<div class="sw off" style="left:1028px;top:663.45px;width:60.6px"><div class="knob" style="left:4.2px;top:2.5px;width:13.8px;height:13.8px;background:#d2d2d2"></div><div class="swt" style="left:22.5px;top:3px;color:#999">维护中</div></div>
<div class="dots" style="left:1089.5px;top:668.75px">...</div>
<div class="sw off" style="left:1119px;top:663.45px;width:50px"><div class="knob" style="left:4.2px;top:2.5px;width:13.8px;height:13.8px;background:#d2d2d2"></div><div class="swt" style="left:23px;top:3px;color:#999">禁用</div></div>
<div class="btnx" style="left:1201.2px;top:664.63px">修改</div>
<div class="dots" style="left:1237px;top:668.85px">...</div>
<div class="cell" style="left:234.7px;top:697.8px;width:86.8px">35</div>
<div class="cell" style="left:321.5px;top:697.8px;width:86.1px">135</div>
<div class="cell" style="left:407.6px;top:697.8px;width:86.7px">11选5</div>
<div class="cell lnk" style="left:494.3px;top:697.8px;width:86.9px"><span style="letter-spacing:.45px">山</span>东11选5</div>
<div class="cell" style="left:581.2px;top:697.8px;width:86.3px">sd11x5</div>
<div class="cell" style="left:667.5px;top:697.8px;width:86.7px">120</div>
<div class="cell" style="left:754.2px;top:697.8px;width:86.8px"><span style="letter-spacing:.45px">全</span>天87期</div>
<div class="cell" style="left:841px;top:697.8px;width:86.5px"><span style="letter-spacing:.45px">第三方</span>彩</div>
<div class="cell" style="left:927.5px;top:697.8px;width:86.5px">0</div>
<div class="sw off" style="left:1028px;top:697.9px;width:60.6px"><div class="knob" style="left:4.2px;top:2.5px;width:13.8px;height:13.8px;background:#d2d2d2"></div><div class="swt" style="left:22.5px;top:3px;color:#999">维护中</div></div>
<div class="dots" style="left:1089.5px;top:703.2px">...</div>
<div class="sw off" style="left:1119px;top:697.9px;width:50px"><div class="knob" style="left:4.2px;top:2.5px;width:13.8px;height:13.8px;background:#d2d2d2"></div><div class="swt" style="left:23px;top:3px;color:#999">禁用</div></div>
<div class="btnx" style="left:1201.2px;top:699.07px">修改</div>
<div class="dots" style="left:1237px;top:703.3px">...</div>
<div class="cell" style="left:234.7px;top:732.24px;width:86.8px">36</div>
<div class="cell" style="left:321.5px;top:732.24px;width:86.1px">136</div>
<div class="cell" style="left:407.6px;top:732.24px;width:86.7px">11选5</div>
<div class="cell lnk" style="left:494.3px;top:732.24px;width:86.9px">1分11选5</div>
<div class="cell" style="left:581.2px;top:732.24px;width:86.3px">yf11x5</div>
<div class="cell" style="left:667.5px;top:732.24px;width:86.7px">10</div>
<div class="cell" style="left:754.2px;top:732.24px;width:86.8px">1<span style="letter-spacing:.45px">分</span>钟1期</div>
<div class="cell" style="left:841px;top:732.24px;width:86.5px"><span style="letter-spacing:.45px">系统</span>彩</div>
<div class="cell" style="left:927.5px;top:732.24px;width:86.5px">0</div>
<div class="sw on" style="left:1032px;top:732.34px;width:50.6px"><div class="knob" style="left:31px;top:3px;width:14.4px;height:14.4px;background:#fff"></div><div class="swt" style="left:8px;top:3.5px;color:#fff">正常</div></div>
<div class="sw on" style="left:1118.6px;top:732.34px;width:50.6px"><div class="knob" style="left:31px;top:3px;width:14.4px;height:14.4px;background:#fff"></div><div class="swt" style="left:8px;top:3.5px;color:#fff">启用</div></div>
<div class="btnx" style="left:1201.2px;top:733.52px">修改</div>
<div class="dots" style="left:1237px;top:737.74px">...</div>
<div class="cell" style="left:234.7px;top:766.69px;width:86.8px">37</div>
<div class="cell" style="left:321.5px;top:766.69px;width:86.1px">137</div>
<div class="cell" style="left:407.6px;top:766.69px;width:86.7px"><span style="letter-spacing:.45px">低频</span>彩</div>
<div class="cell lnk" style="left:494.3px;top:766.69px;width:86.9px"><span style="letter-spacing:.45px">排列</span>三</div>
<div class="cell" style="left:581.2px;top:766.69px;width:86.3px">pl3</div>
<div class="cell" style="left:667.5px;top:766.69px;width:86.7px">1800</div>
<div class="cell" style="left:754.2px;top:766.69px;width:86.8px"><span style="letter-spacing:.45px">全天一</span>期</div>
<div class="cell" style="left:841px;top:766.69px;width:86.5px"><span style="letter-spacing:.45px">第三方</span>彩</div>
<div class="cell" style="left:927.5px;top:766.69px;width:86.5px">0</div>
<div class="sw off" style="left:1028px;top:766.79px;width:60.6px"><div class="knob" style="left:4.2px;top:2.5px;width:13.8px;height:13.8px;background:#d2d2d2"></div><div class="swt" style="left:22.5px;top:3px;color:#999">维护中</div></div>
<div class="dots" style="left:1089.5px;top:772.09px">...</div>
<div class="sw off" style="left:1119px;top:766.79px;width:50px"><div class="knob" style="left:4.2px;top:2.5px;width:13.8px;height:13.8px;background:#d2d2d2"></div><div class="swt" style="left:23px;top:3px;color:#999">禁用</div></div>
<div class="btnx" style="left:1201.2px;top:767.97px">修改</div>
<div class="dots" style="left:1237px;top:772.19px">...</div>
<div class="cell" style="left:234.7px;top:801.13px;width:86.8px">38</div>
<div class="cell" style="left:321.5px;top:801.13px;width:86.1px">138</div>
<div class="cell" style="left:407.6px;top:801.13px;width:86.7px">PK10</div>
<div class="cell lnk" style="left:494.3px;top:801.13px;width:86.9px"><span style="letter-spacing:.45px">幸运飞</span>艇</div>
<div class="cell" style="left:581.2px;top:801.13px;width:86.3px">xyft</div>
<div class="cell" style="left:667.5px;top:801.13px;width:86.7px">30</div>
<div class="cell" style="left:754.2px;top:801.13px;width:86.8px"><span style="letter-spacing:.45px">全</span>天180期</div>
<div class="cell" style="left:841px;top:801.13px;width:86.5px"><span style="letter-spacing:.45px">第三方</span>彩</div>
<div class="cell" style="left:927.5px;top:801.13px;width:86.5px">0</div>
<div class="sw off" style="left:1028px;top:801.23px;width:60.6px"><div class="knob" style="left:4.2px;top:2.5px;width:13.8px;height:13.8px;background:#d2d2d2"></div><div class="swt" style="left:22.5px;top:3px;color:#999">维护中</div></div>
<div class="dots" style="left:1089.5px;top:806.53px">...</div>
<div class="sw off" style="left:1119px;top:801.23px;width:50px"><div class="knob" style="left:4.2px;top:2.5px;width:13.8px;height:13.8px;background:#d2d2d2"></div><div class="swt" style="left:23px;top:3px;color:#999">禁用</div></div>
<div class="btnx" style="left:1201.2px;top:802.41px">修改</div>
<div class="dots" style="left:1237px;top:806.63px">...</div>
</div>
<div id="foot" class="a"></div>
<div class="t" style="left:221.2px;top:820px;font-size:12.4px;line-height:20px;color:#666">Copyright © 2024 <span style="color:#2f7bd9">Ascloud</span> <span style="letter-spacing:.3px">欢迎使用</span> YESM <span style="letter-spacing:.3px">开发系统</span> all rights reserved.</div>
<div class="t" style="right:3px;top:820px;font-size:12.4px;line-height:20px;color:#666">乐游娱乐V5.21</div>
</body></html>
